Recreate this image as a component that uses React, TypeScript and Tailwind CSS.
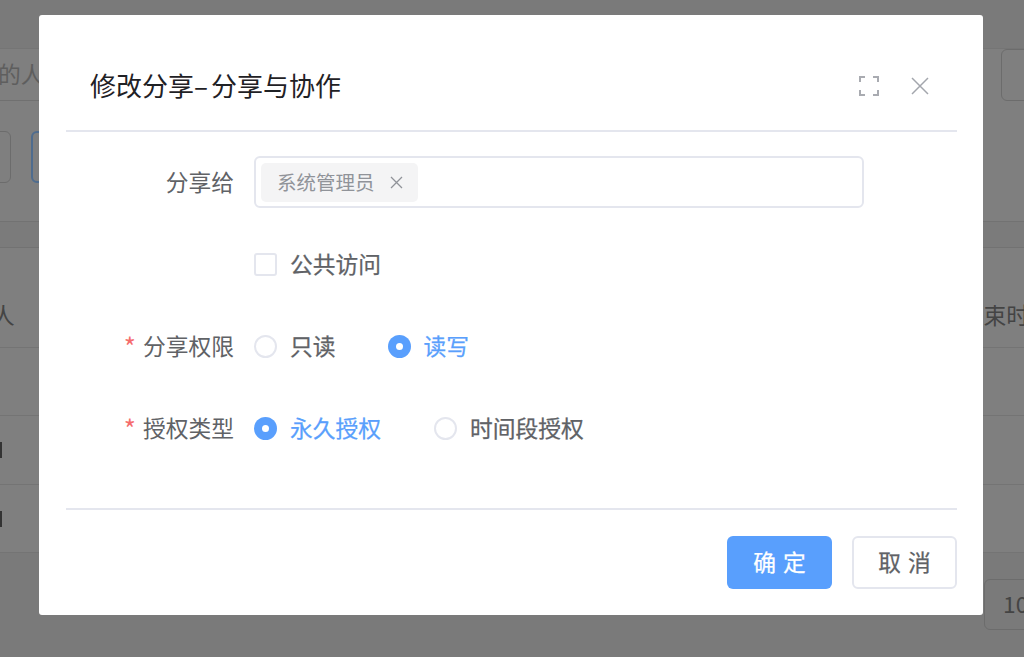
import React from "react";

const font = { fontFamily: '"Noto Sans CJK SC", "Noto Sans", sans-serif' };

function Radio({ checked, label, className = "" }: { checked?: boolean; label: string; className?: string }) {
  return (
    <div className={"flex items-center " + className}>
      {checked ? (
        <span className="flex h-[23px] w-[23px] items-center justify-center rounded-full bg-[#599ffd]">
          <span className="h-[7px] w-[7px] rounded-full bg-white" />
        </span>
      ) : (
        <span className="h-[23px] w-[23px] rounded-full border-2 border-[#e4e6ee] bg-white" />
      )}
      <span className={"ml-[13px] text-[22.75px] leading-[30px] [-webkit-text-stroke:0.25px] " + (checked ? "text-[#5a9ffc]" : "text-[#606266]")}>
        {label}
      </span>
    </div>
  );
}

function FormLabel({ required, text }: { required?: boolean; text: string }) {
  return (
    <div className="flex w-[188px] shrink-0 items-center justify-end pr-[20px] text-[22.75px] leading-[30px] text-[#606266]">
      {required && <span className="mr-[7px] text-[26px] leading-[30px] text-[#f56c6c]">*</span>}
      <span>{text}</span>
    </div>
  );
}

export default function App() {
  return (
    <div style={font} className="relative h-[657px] w-[1024px] overflow-hidden bg-[#7f7f7f]">
      {/* dimmed page behind the dialog */}
      <div className="flex h-[657px] flex-col text-[#3d3d3d]">
        <div className="flex h-[49px] shrink-0 border-b border-[#757575] bg-[#7a7a7a]" />
        <div className="flex h-[82px] shrink-0 justify-between">
          <div className="flex h-[52px] w-[120px] items-center border-b border-[#707070] text-[22.75px] text-[#5e5e5e]">
            <span className="-ml-[2px]">的人</span>
          </div>
          <div className="h-[52px] w-[60px] translate-x-[37px] rounded-[6px] border border-[#6c6c6c]" />
        </div>
        <div className="flex h-[90px] shrink-0 items-start gap-[20px]">
          <div className="-ml-[20px] h-[52px] w-[31px] rounded-[6px] border border-[#6c6c6c]" />
          <div className="h-[52px] w-[40px] rounded-[6px] border-2 border-[#4f6c8e]" />
        </div>
        <div className="h-[27px] shrink-0 border-y border-[#727272] bg-[#7b7b7b]" />
        <div className="flex h-[100px] shrink-0 items-center justify-between border-b border-[#747474] pt-[36px] text-[22.75px] text-[#444444]">
          <span className="-ml-[8px]">人</span>
          <span className="-mr-[5px]">束时</span>
        </div>
        <div className="h-[68px] shrink-0 border-b border-[#747474]" />
        <div className="flex h-[69px] shrink-0 items-center border-b border-[#747474]">
          <span className="h-[16px] w-[2px] bg-[#333333]" />
        </div>
        <div className="flex h-[68px] shrink-0 items-center border-b border-[#747474]">
          <span className="h-[16px] w-[2px] bg-[#333333]" />
        </div>
        <div className="flex flex-1 justify-end bg-[#7a7a7a] pt-[26px]">
          <div className="-mr-[20px] flex h-[51px] w-[60px] items-center rounded-[6px] border border-[#6c6c6c] pl-[18px] text-[22.75px] text-[#444444]">
            10
          </div>
        </div>
      </div>

      {/* dialog */}
      <div className="absolute left-[39px] top-[15px] flex h-[600px] w-[944px] flex-col rounded-[3px] bg-white pl-[27px] pr-[26px]">
        <div className="flex h-[117px] shrink-0 items-center justify-between border-b-2 border-[#e4e6ee] pl-[24px] pr-[28px] pt-[27px]">
          <span className="-mt-[2px] text-[26px] leading-[36px] text-[#1f2125]">
            修改分享<span className="tracking-[3px]">–</span>分享与协作
          </span>
          <div className="flex items-center gap-[32px]">
            <svg width="20" height="20" viewBox="0 0 20 20" fill="none" stroke="#a9abb1" strokeWidth="2">
              <path d="M6 1H1v5M14 1h5v5M1 14v5h5M19 14v5h-5" />
            </svg>
            <svg width="18" height="18" viewBox="0 0 18 18" fill="none" stroke="#a3a6ad" strokeWidth="1.5">
              <path d="M1 1l16 16M17 1L1 17" />
            </svg>
          </div>
        </div>

        <div className="flex h-[378px] shrink-0 flex-col border-b-2 border-[#e4e6ee]">
          <div className="mt-[24px] flex h-[52px] items-center">
            <FormLabel text="分享给" />
            <div className="flex h-[52px] w-[610px] items-center rounded-[6px] border-2 border-[#e4e6ee] px-[5px]">
              <div className="flex h-[39px] w-[157px] items-center rounded-[5px] bg-[#f4f4f5] pl-[16px] text-[19.5px] text-[#909399]">
                <span className="leading-[26px]">系统管理员</span>
                <svg className="ml-[15px]" width="13" height="13" viewBox="0 0 13 13" fill="none" stroke="#909399" strokeWidth="1.3">
                  <path d="M1 1l11 11M12 1L1 12" />
                </svg>
              </div>
            </div>
          </div>

          <div className="mt-[44px] flex h-[24px] items-center pl-[188px]">
            <span className="h-[23px] w-[23px] rounded-[3px] border-2 border-[#e4e6ee] bg-white" />
            <span className="ml-[13px] text-[22.75px] leading-[30px] text-[#606266] [-webkit-text-stroke:0.25px]">公共访问</span>
          </div>

          <div className="mt-[58px] flex h-[24px] items-center">
            <FormLabel required text="分享权限" />
            <Radio label="只读" />
            <Radio checked label="读写" className="ml-[52px]" />
          </div>

          <div className="mt-[58px] flex h-[24px] items-center">
            <FormLabel required text="授权类型" />
            <Radio checked label="永久授权" />
            <Radio label="时间段授权" className="ml-[53px]" />
          </div>
        </div>

        <div className="flex flex-1 items-start justify-end gap-[20px] pt-[26px]">
          <div className="flex h-[53px] w-[105px] items-center justify-center rounded-[6px] bg-[#599ffd] text-[22.75px] tracking-[7px] text-white [-webkit-text-stroke:0.25px]">
            <span className="pl-[7px]">确定</span>
          </div>
          <div className="flex h-[53px] w-[105px] items-center justify-center rounded-[6px] border-2 border-[#e4e6ee] bg-white text-[22.75px] tracking-[7px] text-[#606266] [-webkit-text-stroke:0.25px]">
            <span className="pl-[7px]">取消</span>
          </div>
        </div>
      </div>
    </div>
  );
}
